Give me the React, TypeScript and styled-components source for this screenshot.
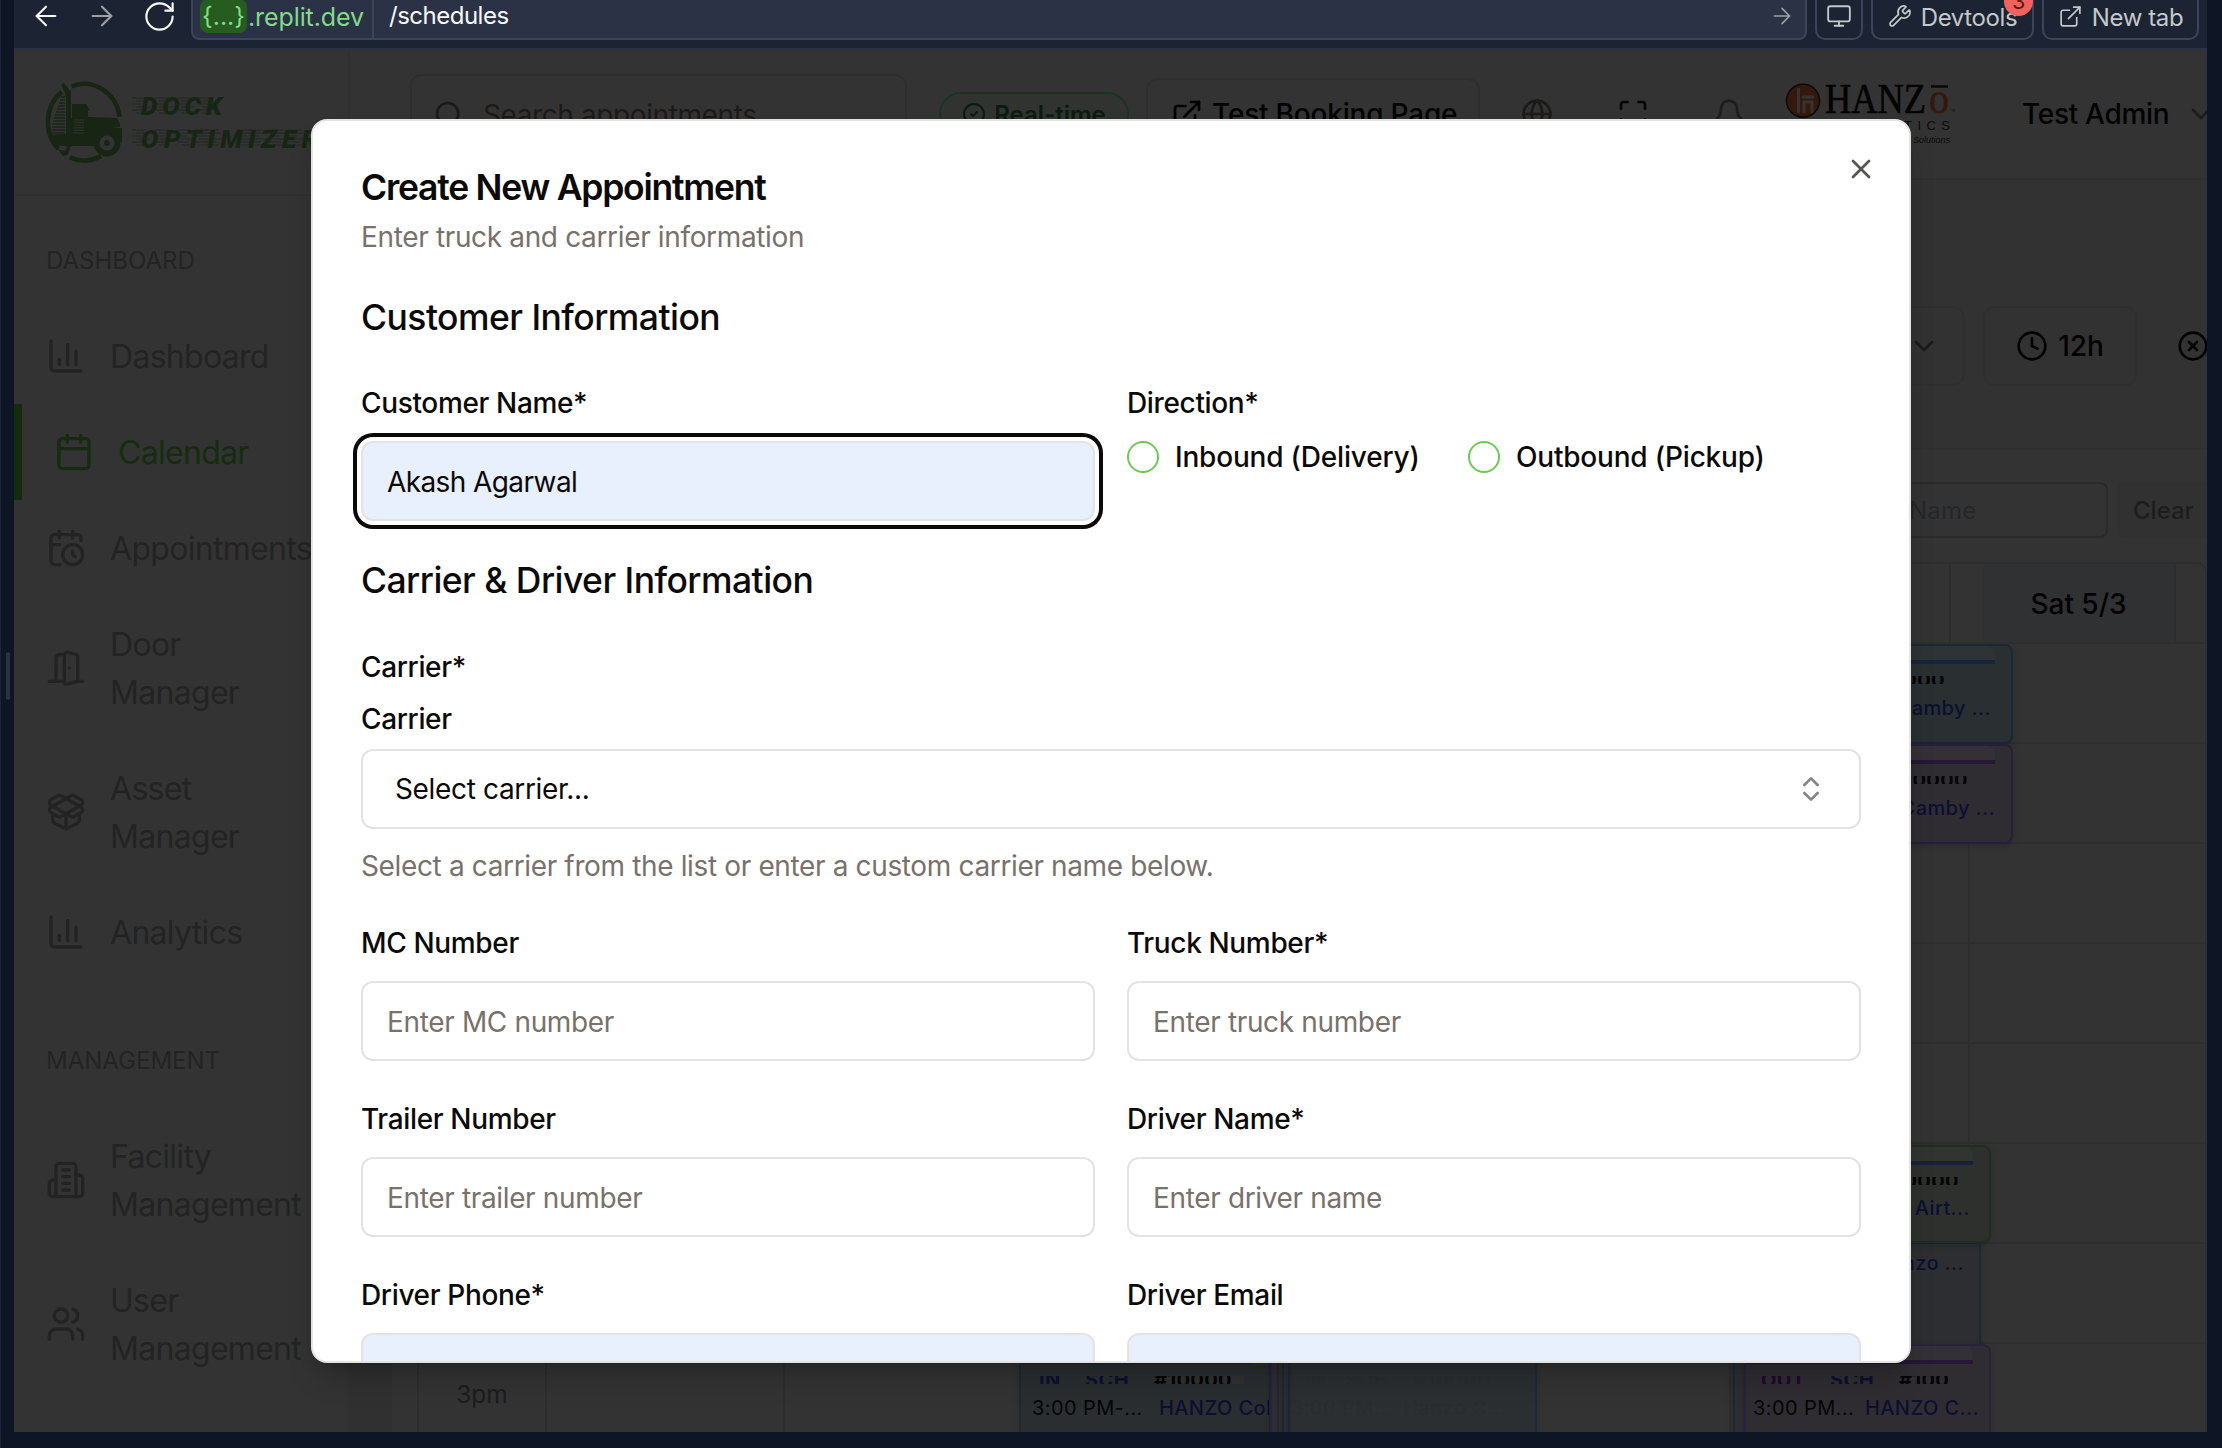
import React from 'react';
import styled, { createGlobalStyle, css } from 'styled-components';
import {
  ArrowLeft, ArrowRight, RotateCw, Monitor, Wrench, ExternalLink, Search, CircleCheck, Globe, Maximize, Bell,
  ChevronDown, ChevronsUpDown, Clock, CircleX, ChartColumn, Calendar, CalendarClock, DoorOpen, PackageOpen, Users, X,
} from 'lucide-react';

const Global = createGlobalStyle`
  * { box-sizing: border-box; }
  html, body { margin: 0; padding: 0; }
  body {
    width: 2222px; height: 1448px; overflow: hidden; background: #0e1525;
    font-family: Inter, "Liberation Sans", sans-serif; font-size: 28px; color: #0c0a09;
  }
  button, input { font: inherit; color: inherit; }
`;

const Window = styled.div`
  width: 2222px; height: 1448px; display: flex; overflow: hidden; position: relative;
`;
const Gutter = styled.div`
  width: 14px; flex: none; display: flex; justify-content: flex-end; align-items: flex-start;
  padding: 652px 4px 0 0; border-left: 1px solid #1c2333;
`;
const Grip = styled.div`width: 4px; height: 48px; border-radius: 2px; background: #2b3245;`;
const Pane = styled.div`width: 2193px; height: 1432px; display: flex; flex-direction: column; overflow: hidden;`;

/* Browser bar */
const Bar = styled.div`
  height: 50px; flex: none; display: flex; align-items: flex-end; padding: 0 8px 8px 12px;
  background: #1c2333; border-bottom: 2px solid #2b3245; overflow: hidden; color: #c2c8cc;
`;
const NavIcons = styled.div`
  height: 48px; width: 165px; flex: none; display: flex; align-items: center; gap: 24px; padding-left: 4px; color: #f5f9fc;
  svg { flex: none; }
`;
const UrlBox = styled.div`
  height: 48px; width: 1616px; margin-right: 8px; flex: none; display: flex; align-items: center;
  background: #2b3245; border: 2px solid #3c445c; border-radius: 8px; padding: 0 10px 0 7px; font-size: 25px;
`;
const Chip = styled.span`
  height: 34px; width: 47px; margin-right: 1px; background: #275c20; color: #84d98b; border-radius: 8px; text-align: center; line-height: 34px;
`;
const Domain = styled.span`color: #84d98b; width: 124px; letter-spacing: -0.1px; padding-top: 2px;`;
const Path = styled.span`
  color: #f5f9fc; flex: 1; height: 46px; line-height: 46px; border-left: 2px solid #3c445c; padding-left: 15px;
  font-size: 24px; letter-spacing: -0.5px;
`;
const BarButton = styled.div<{ $w: number; $mr?: number }>`
  width: ${p => p.$w}px; margin-right: ${p => p.$mr ?? 0}px; height: 48px; flex: none; position: relative;
  display: flex; align-items: center; justify-content: center; gap: 9px;
  border: 2px solid #3c445c; border-radius: 10px; font-size: 24px; letter-spacing: -0.4px; white-space: nowrap;
`;
const BarText = styled.span`padding-top: 2px;`;
const Count = styled.span`
  position: absolute; right: -1px; top: -7px; width: 29px; height: 29px; border-radius: 50%;
  background: #f0625d; color: #5c1512; font-size: 21px; line-height: 29px; text-align: center;
`;

/* Page */
const Page = styled.div`flex: 1; display: flex; min-height: 0; background: #333333;`;
const Sidebar = styled.aside`width: 336px; flex: none; border-right: 3px solid #313131; background: #333333;`;
const Brand = styled.div`height: 146px; border-bottom: 2px solid #303030; padding: 30px 0 0 30px;`;
const NavTitle = styled.div<{ $top: number; $gap: number }>`
  padding-left: 32px; margin-top: ${p => p.$top}px; margin-bottom: ${p => p.$gap}px; height: 32px; line-height: 32px;
  font-size: 24px; letter-spacing: 0; color: #232323;
`;
const NavItem = styled.div<{ $active?: boolean }>`
  display: flex; align-items: center; gap: 24px; padding: 24px 0 24px 32px; font-size: 32px; line-height: 48px;
  letter-spacing: -0.7px; color: ${p => (p.$active ? '#162c10' : '#232323')};
  ${p => p.$active && css`border-left: 8px solid #142b0e;`}
  svg { flex: none; }
`;
const NavText = styled.span`width: 200px; padding-top: 1px; margin-bottom: -1px;`;

const Main = styled.main`flex: 1; min-width: 0; display: flex; flex-direction: column; overflow: hidden;`;
const Header = styled.header`
  height: 130px; flex: none; border-bottom: 2px solid #303030; display: flex; align-items: center; padding-left: 60px;
`;
const SearchBox = styled.div`
  width: 497px; height: 80px; margin-right: 32px; border: 2px solid #2e2e2e; border-radius: 12px; flex: none;
  display: flex; align-items: center; gap: 18px; padding: 2px 0 0 21px; color: #1b1a19; letter-spacing: -0.4px;
`;
const Live = styled.div`
  width: 190px; height: 44px; margin-right: 17px; flex: none; border: 2px solid #1c3222; border-radius: 22px; background: #30332f;
  display: flex; align-items: center; justify-content: center; gap: 8px; font-size: 24px; font-weight: 600; color: #0a1c10;
`;
const Booking = styled.div`
  width: 334px; height: 72px; margin-right: 17px; flex: none; border: 2px solid #2e2e2e; border-radius: 12px;
  display: flex; align-items: center; gap: 9px; padding-left: 23px; font-weight: 500; color: #020202; white-space: nowrap;
  letter-spacing: -0.2px;
`;
const IconButton = styled.div<{ $c: string }>`
  width: 80px; margin-right: 16px; flex: none; display: flex; justify-content: center; color: ${p => p.$c};
`;
const Account = styled.div`
  display: flex; align-items: center; gap: 16px; margin-left: 67px; font-weight: 500; color: #020202; white-space: nowrap;
  letter-spacing: -0.3px;
  svg { color: #1d1c1b; flex: none; }
`;
const Toolbar = styled.div`
  height: 270px; flex: none; border-bottom: 2px solid #303030; padding: 126px 0 0; display: flex; justify-content: flex-end;
  align-items: flex-start; margin-right: -24px; gap: 18px; background: #323232;
`;
const Tool = styled.div<{ $w: number; $plain?: boolean }>`
  width: ${p => p.$w}px; height: 80px; flex: none; display: flex; align-items: center; justify-content: center; gap: 10px;
  border: 2px solid ${p => (p.$plain ? 'transparent' : '#2f2f2f')}; border-radius: 12px; font-weight: 500; color: #020202;
`;
const DateTool = styled(Tool)`justify-content: flex-end; padding-right: 23px; color: #1b1a19;`;
const Filters = styled.div`
  height: 112px; flex: none; padding-top: 32px; display: flex; justify-content: flex-end; gap: 9px; margin-right: -4px; font-size: 24px;
`;
const NameInput = styled.div`
  width: 500px; height: 56px; border: 2px solid #2a2b2b; border-radius: 8px; line-height: 54px; padding-left: 180px; color: #242628;
  letter-spacing: 0.2px;
`;
const Clear = styled.div`
  width: 94px; height: 56px; line-height: 57px; border-radius: 8px; background: #313131; padding-left: 16px; font-weight: 500; color: #1d1d1d;
`;
const DayHead = styled.div`
  height: 82px; flex: none; margin-left: 64px; border: 2px solid #2e2e2e; border-left: 0; border-radius: 0 10px 0 0;
  display: flex; justify-content: flex-end; font-weight: 500; color: #020202;
`;
const DayCell = styled.div<{ $w: number; $tint?: boolean; $mr?: number }>`
  width: ${p => p.$w}px; margin-right: ${p => p.$mr ?? 0}px; border-right: 2px solid #2d2d2d; line-height: 80px; text-align: center;
  background: ${p => (p.$tint ? '#303132' : 'transparent')};
`;
const BoardRow = styled.div`flex: 1; display: flex; gap: 25px; min-height: 0; overflow: hidden;`;
const Rail = styled.div`width: 42px; flex: none; background: #303030;`;
const Board = styled.div`flex: 1; position: relative; display: flex; overflow: hidden; border-right: 2px solid #2f2f2f;`;
const Lane = styled.div<{ $w?: number }>`
  ${p => (p.$w ? css`width: ${p.$w}px; flex: none;` : css`flex: 1;`)}
  display: flex; flex-direction: column; border-left: 2px solid #2d2d2d;
`;
const Slot = styled.div`
  height: 100px; flex: none; border-bottom: 2px solid #2e2e2e; display: flex; justify-content: center;
  font-size: 24.5px; color: #1d1d1d; padding-top: 35px;
`;
const Event = styled.div<{ $x: number; $y: number; $w: number; $h: number; $bg: string; $line: string; $r?: number }>`
  position: absolute; left: ${p => p.$x}px; top: ${p => p.$y}px; width: ${p => p.$w}px; height: ${p => p.$h}px;
  background: ${p => p.$bg}; border: 2px solid ${p => p.$line}; border-radius: ${p => p.$r ?? 8}px; overflow: hidden;
  font-size: 20px; letter-spacing: 0.4px; box-shadow: 0 2px 6px rgba(0, 0, 0, 0.16);
`;
const Stripe = styled.div<{ $c: string }>`
  height: 18px; margin-right: 16px; border-bottom: 4px solid ${p => p.$c}; border-radius: 0 8px 0 0; background: rgba(255, 255, 255, 0.02);
`;
const Tags = styled.div<{ $pl?: number; $pr?: number }>`
  margin-top: 12px; height: 8px; overflow: hidden; display: flex; align-items: center;
  padding: 0 ${p => p.$pr ?? 0}px 0 ${p => p.$pl ?? 0}px;
  font-size: 20px; font-weight: 700; line-height: 8px;
`;
const Tag = styled.span<{ $c: string; $w?: number; $bg?: string }>`
  color: ${p => p.$c}; background: ${p => p.$bg ?? 'transparent'}; flex: none; white-space: nowrap;
  ${p => (p.$w ? css`width: ${p.$w}px;` : css`margin-left: auto;`)}
`;
const Line = styled.div<{ $pl?: number; $pr?: number; $mt?: number }>`
  margin-top: ${p => p.$mt ?? 12}px; line-height: 24px; display: flex; white-space: nowrap;
  padding: 0 ${p => p.$pr ?? 0}px 0 ${p => p.$pl ?? 0}px;
`;
const Time = styled.span<{ $w: number; $c?: string }>`width: ${p => p.$w}px; flex: none; color: ${p => p.$c ?? '#050505'};`;
const Who = styled.span<{ $end?: boolean; $c?: string }>`
  font-weight: 500; color: ${p => p.$c ?? '#0c1030'}; ${p => p.$end && css`margin-left: auto;`}
`;

/* Dialog */
const Dialog = styled.section`
  position: absolute; left: 311px; top: 119px; width: 1600px; height: 1244px; overflow: hidden;
  background: #ffffff; border: 2px solid #e5e3e1; border-radius: 16px; padding: 47px 48px 0;
  box-shadow: 0 20px 30px -6px rgba(0, 0, 0, 0.2), 0 8px 12px -8px rgba(0, 0, 0, 0.2);
`;
const Close = styled.button`
  position: absolute; right: 32px; top: 32px; width: 32px; height: 32px; padding: 0; border: 0; background: none; color: #555453;
`;
const Title = styled.h2`margin: 0; height: 40px; line-height: 40px; font-size: 35.5px; font-weight: 600; letter-spacing: -1.25px;`;
const Sub = styled.p`margin: 9px 0 0; height: 40px; line-height: 41px; color: #78716c; letter-spacing: -0.35px;`;
const Section = styled.h3<{ $top: number }>`
  margin: ${p => p.$top}px 0 0; height: 48px; line-height: 48px; font-size: 35.5px; font-weight: 500; letter-spacing: -0.54px;
`;
const Columns = styled.div<{ $top: number }>`
  display: grid; grid-template-columns: 734px 734px; column-gap: 32px; row-gap: 38px; margin-top: ${p => p.$top}px;
`;
const Label = styled.label<{ $top?: number }>`
  display: block; height: 40px; line-height: 41px; font-weight: 500; letter-spacing: -0.35px; margin-top: ${p => p.$top ?? 0}px;
`;
const Input = styled.input<{ $filled?: boolean; $focus?: boolean }>`
  display: block; width: 100%; height: 80px; margin-top: 18px; padding: 2px 24px 0; outline: none;
  border: 2px solid #e5e3e1; border-radius: 12px; background: ${p => (p.$filled ? '#e8effd' : '#ffffff')};
  letter-spacing: ${p => (p.$filled ? -0.6 : -0.35)}px;
  ${p => p.$focus && css`box-shadow: 0 0 0 4px #ffffff, 0 0 0 8px #0c0a09;`}
  &::placeholder { color: #78716c; opacity: 1; }
`;
const Radios = styled.div`display: flex; margin-top: 18px;`;
const Radio = styled.label<{ $w: number }>`
  width: ${p => p.$w}px; display: flex; align-items: center; gap: 16px; height: 32px; font-weight: 500; letter-spacing: -0.2px; white-space: nowrap;
`;
const Dot = styled.span`width: 32px; height: 32px; flex: none; border: 2px solid #6bcb52; border-radius: 50%;`;
const Select = styled.div`
  display: flex; align-items: center; justify-content: space-between; height: 80px; margin-top: 10px; padding: 0 32px;
  border: 2px solid #e5e3e1; border-radius: 12px; letter-spacing: -0.35px;
  svg { color: #858484; }
`;
const Hint = styled.p`margin: 17px 0 0; height: 40px; line-height: 40px; color: #78716c; letter-spacing: -0.36px;`;

const Building = () => (
  <svg width="40" height="40" viewBox="0 0 24 24" fill="none" stroke="currentColor" strokeWidth="2" strokeLinecap="round" strokeLinejoin="round">
    <path d="M6 22V4a2 2 0 0 1 2-2h8a2 2 0 0 1 2 2v18Z" />
    <path d="M6 12H4a2 2 0 0 0-2 2v6a2 2 0 0 0 2 2h2" />
    <path d="M18 9h2a2 2 0 0 1 2 2v9a2 2 0 0 1-2 2h-2" />
    <path d="M10 6h4M10 10h4M10 14h4M10 18h4" />
  </svg>
);

const speed = (x: number, y: number, n: number) =>
  Array.from({ length: n }, (_, i) => (
    <path key={`${x}-${y}-${i}`} d={`M${x + (i % 2) * 4} ${y + i * 3}h${14 - (i % 3) * 2}`} />
  ));

const DockLogo = () => (
  <svg width="300" height="90" viewBox="44 80 300 90">
    <g fill="none" stroke="#182514" strokeWidth="4.5">
      <path d="M71.700 86.300A36 38 0 0 1 119.600 116.700" />
      <path d="M61.800 92A36 38 0 0 0 58.500 148.900" />
      <path d="M70 157.500A36 38 0 0 0 101 156" />
    </g>
    <g fill="#182514">
      <path d="M66 97h5v50h-5z" />
      <path d="M72 104h14l4 7-2-1v7l29 1 3 6v3l-8 1h10v14h-3c-1-12-20-15-23-1l-1 5H57l-6-4-2-7 17-1V118h6z" />
      <path d="M61 85l3-2 7 9v7h-5l-1-6z" />
      <path d="M58 149c7 3 9 2 9-5h3c0 9-2 12-7 12z" />
    </g>
    <g stroke="#182514" strokeWidth="1.4">
      {Array.from({ length: 13 }, (_, i) => <path key={i} d={`M${61 - Math.min(i, 9)} ${97 + i * 3}H65`} />)}
    </g>
    <g stroke="#333333" strokeWidth="0.900">
      {Array.from({ length: 6 }, (_, i) => <path key={i} d={`M74 ${120 + i * 2.6}h10`} />)}
    </g>
    <circle cx="107" cy="143" r="10.500" fill="#333333" stroke="#182514" strokeWidth="6" />
    <circle cx="107" cy="143" r="3" fill="#182514" />
    <g stroke="#182514" strokeWidth="0.800" opacity="0.750">
      {[132, 155, 177, 198].map(x => speed(x, 98, 6))}
      {[132, 155, 177, 195, 205, 237, 249, 269, 288].map(x => speed(x, 130, 6))}
    </g>
    <g fill="#182514" fontFamily='Roboto, "Liberation Sans", sans-serif' fontWeight="900" fontStyle="italic" fontSize="26">
      <text x="141" y="115" textLength="81">DOCK</text>
      <text x="141" y="147.500" textLength="177">OPTIMIZER</text>
    </g>
  </svg>
);

const HanzoMark = styled.svg`flex: none;`;

const HanzoLogo = () => (
  <HanzoMark width="170" height="80" viewBox="1785 74 170 80">
    <circle cx="1803" cy="100.700" r="16.500" fill="#34180b" stroke="#0d0a08" strokeWidth="1.500" />
    <path d="M1798.500 88v25M1804 113v-11h8v11M1802 97h12" stroke="#353231" strokeWidth="3" fill="none" />
    <g fontFamily='"Liberation Serif", serif'>
      <text x="1825" y="113" fontSize="42" fill="#030303" stroke="#030303" strokeWidth="0.600" textLength="101" lengthAdjust="spacingAndGlyphs">HANZ</text>
      <text x="1929" y="113" fontSize="44" fill="#34180b" stroke="#34180b" strokeWidth="0.600" textLength="20" lengthAdjust="spacingAndGlyphs">o</text>
    </g>
    <path d="M1931 86.500h17" stroke="#0a0807" strokeWidth="2.500" />
    <text x="1837" y="130" fontFamily='"Liberation Sans", sans-serif' fontSize="13" fill="#0b0b0b" textLength="113">LOGISTICS</text>
    <text x="1950" y="143" textAnchor="end" fontFamily='"Liberation Sans", sans-serif' fontSize="9" fontStyle="italic" fill="#0b0b0b">Solutions</text>
    <text x="1951" y="112" fontFamily='"Liberation Sans", sans-serif' fontSize="4" fill="#0b0b0b">TM</text>
  </HanzoMark>
);

const navy = '#0c1030';

export default function App() {
  return (
    <>
      <Global />
      <Window>
        <Gutter><Grip /></Gutter>
        <Pane>
          <Bar>
            <NavIcons>
              <ArrowLeft size={32} strokeWidth={1.6} />
              <ArrowRight size={32} strokeWidth={1.6} color="#9da2a6" />
              <RotateCw size={35} strokeWidth={1.5} />
            </NavIcons>
            <UrlBox>
              <Chip>{'{...}'}</Chip>
              <Domain>.replit.dev</Domain>
              <Path>/schedules</Path>
              <ArrowRight size={26} strokeWidth={1.5} color="#9da2a6" />
            </UrlBox>
            <BarButton $w={48} $mr={8}><Monitor size={26} strokeWidth={1.7} /></BarButton>
            <BarButton $w={163} $mr={8}><Wrench size={24} strokeWidth={1.7} /><BarText>Devtools</BarText><Count>3</Count></BarButton>
            <BarButton $w={157}><ExternalLink size={25} strokeWidth={1.6} /><BarText>New tab</BarText></BarButton>
          </Bar>
          <Page>
            <Sidebar>
              <Brand><DockLogo /></Brand>
              <NavTitle $top={49} $gap={31}>DASHBOARD</NavTitle>
              <NavItem><ChartColumn size={40} /><NavText>Dashboard</NavText></NavItem>
              <NavItem $active><Calendar size={40} /><NavText>Calendar</NavText></NavItem>
              <NavItem><CalendarClock size={40} /><NavText>Appointments</NavText></NavItem>
              <NavItem><DoorOpen size={40} /><NavText>Door<br />Manager</NavText></NavItem>
              <NavItem><PackageOpen size={40} /><NavText>Asset<br />Manager</NavText></NavItem>
              <NavItem><ChartColumn size={40} /><NavText>Analytics</NavText></NavItem>
              <NavTitle $top={65} $gap={31}>MANAGEMENT</NavTitle>
              <NavItem><Building /><NavText>Facility<br />Management</NavText></NavItem>
              <NavItem><Users size={40} /><NavText>User<br />Management</NavText></NavItem>
            </Sidebar>
            <Main>
              <Header>
                <SearchBox><Search size={32} /><span>Search appointments</span></SearchBox>
                <Live><CircleCheck size={24} />Real-time</Live>
                <Booking><ExternalLink size={32} />Test Booking Page</Booking>
                <IconButton $c="#1b1a19"><Globe size={32} /></IconButton>
                <IconButton $c="#050505"><Maximize size={32} /></IconButton>
                <IconButton $c="#1d1d1d"><Bell size={32} /></IconButton>
                <HanzoLogo />
                <Account><span>Test Admin</span><ChevronDown size={32} /></Account>
              </Header>
              <Toolbar>
                <DateTool $w={380}><ChevronDown size={32} /></DateTool>
                <Tool $w={154}><Clock size={32} />12h</Tool>
                <Tool $w={76} $plain><CircleX size={32} /></Tool>
              </Toolbar>
              <Filters>
                <NameInput>Customer Name</NameInput>
                <Clear>Clear</Clear>
              </Filters>
              <DayHead>
                <DayCell $w={240} $mr={32} />
                <DayCell $w={193} $tint $mr={29}>Sat 5/3</DayCell>
              </DayHead>
              <BoardRow>
                <Rail />
                <Board>
                  <Lane $w={128}>{Array.from({ length: 8 }, (_, i) => <Slot key={i}>{i === 7 ? '3pm' : ''}</Slot>)}</Lane>
                  {[238, 236, 236, 236, 238, 239].map((w, c) => (
                    <Lane key={c} $w={w}>{Array.from({ length: 8 }, (_, i) => <Slot key={i} />)}</Lane>
                  ))}
                  <Lane>{Array.from({ length: 8 }, (_, i) => <Slot key={i} />)}</Lane>

                  <Event $x={1320} $y={0} $w={276} $h={100} $bg="#2a2f31" $line="#1b2739">
                    <Stripe $c="#17253b" />
                    <Tags $pr={66}><Tag $c="#050505">#10000</Tag></Tags>
                    <Line $pr={20}><Who $end>Hanzo Camby ...</Who></Line>
                  </Event>
                  <Event $x={1320} $y={100} $w={276} $h={100} $bg="#302d32" $line="#25203a">
                    <Stripe $c="#251735" />
                    <Tags $pr={43}><Tag $c="#050505">#10000</Tag></Tags>
                    <Line $pr={16}><Who $end>Hanzo Camby ...</Who></Line>
                  </Event>
                  <Event $x={1330} $y={598} $w={234} $h={104} $bg="#2d2e31" $line="#1d2834" $r={0}>
                    <Line $mt={7} $pr={15}><Who $end>Hanzo ...</Who></Line>
                  </Event>
                  <Event $x={1327} $y={501} $w={247} $h={98} $bg="#2d302d" $line="#1f2e21">
                    <Stripe $c="#17223a" />
                    <Tags $pr={30}><Tag $c="#050505">#10000</Tag></Tags>
                    <Line $mt={11} $pr={19}><Who $end>HANZO Airt...</Who></Line>
                  </Event>
                  <Event $x={602} $y={700} $w={252} $h={120} $bg="#2a2e31" $line="#1d2834">
                    <Stripe $c="#17253b" />
                    <Tags $pl={18}>
                      <Tag $c={navy} $w={46}>IN</Tag><Tag $c={navy} $w={69}>SCH</Tag><Tag $c="#050505" $w={90} $bg="#313131">#10000</Tag>
                    </Tags>
                    <Line $pl={11}><Time $w={127}>3:00 PM-...</Time><Who>HANZO Col</Who></Line>
                  </Event>
                  <Event $x={853} $y={700} $w={9} $h={120} $bg="#302d32" $line="#29243a" $r={0} />
                  <Event $x={865} $y={700} $w={8} $h={120} $bg="#2d2e31" $line="#1d2834" $r={0} />
                  <Event $x={872} $y={700} $w={248} $h={120} $bg="#2b2f31" $line="#1f2a35" $r={0}>
                    <Stripe $c="#2b2f31" />
                    <Tags $pl={14}>
                      <Tag $c="#292d2f" $w={40}>IN</Tag><Tag $c="#292d2f" $w={68}>SCH</Tag><Tag $c="#292d2f" $w={90}>#10000</Tag>
                    </Tags>
                    <Line><Time $w={112} $c="#292d2f">3:00 PM...</Time><Who $c="#292d2f">Hanzo C...</Who></Line>
                  </Event>
                  <Event $x={1316} $y={700} $w={14} $h={120} $bg="#2d2e31" $line="#1d2834" $r={0} />
                  <Event $x={1327} $y={700} $w={247} $h={120} $bg="#302d32" $line="#28233a">
                    <Stripe $c="#251735" />
                    <Tags $pl={15}>
                      <Tag $c="#1e0733" $w={69}>OUT</Tag><Tag $c={navy} $w={69}>SCH</Tag><Tag $c="#050505" $w={60}>#100</Tag>
                    </Tags>
                    <Line $pl={7}><Time $w={112}>3:00 PM...</Time><Who>HANZO C...</Who></Line>
                  </Event>
                </Board>
              </BoardRow>
            </Main>
          </Page>
        </Pane>

        <Dialog>
          <Close><X size={32} strokeWidth={2} /></Close>
          <Title>Create New Appointment</Title>
          <Sub>Enter truck and carrier information</Sub>
          <Section $top={37}>Customer Information</Section>
          <Columns $top={41}>
            <div>
              <Label>Customer Name*</Label>
              <Input $filled $focus defaultValue="Akash Agarwal" />
            </div>
            <div>
              <Label>Direction*</Label>
              <Radios>
                <Radio $w={341}><Dot />Inbound (Delivery)</Radio>
                <Radio $w={341}><Dot />Outbound (Pickup)</Radio>
              </Radios>
            </div>
          </Columns>
          <Section $top={36}>Carrier &amp; Driver Information</Section>
          <Label $top={42}>Carrier*</Label>
          <Label $top={12}>Carrier</Label>
          <Select>Select carrier...<ChevronsUpDown size={32} /></Select>
          <Hint>Select a carrier from the list or enter a custom carrier name below.</Hint>
          <Columns $top={37}>
            <div><Label>MC Number</Label><Input placeholder="Enter MC number" /></div>
            <div><Label>Truck Number*</Label><Input placeholder="Enter truck number" /></div>
            <div><Label>Trailer Number</Label><Input placeholder="Enter trailer number" /></div>
            <div><Label>Driver Name*</Label><Input placeholder="Enter driver name" /></div>
            <div><Label>Driver Phone*</Label><Input $filled /></div>
            <div><Label>Driver Email</Label><Input $filled /></div>
          </Columns>
        </Dialog>
      </Window>
    </>
  );
}
